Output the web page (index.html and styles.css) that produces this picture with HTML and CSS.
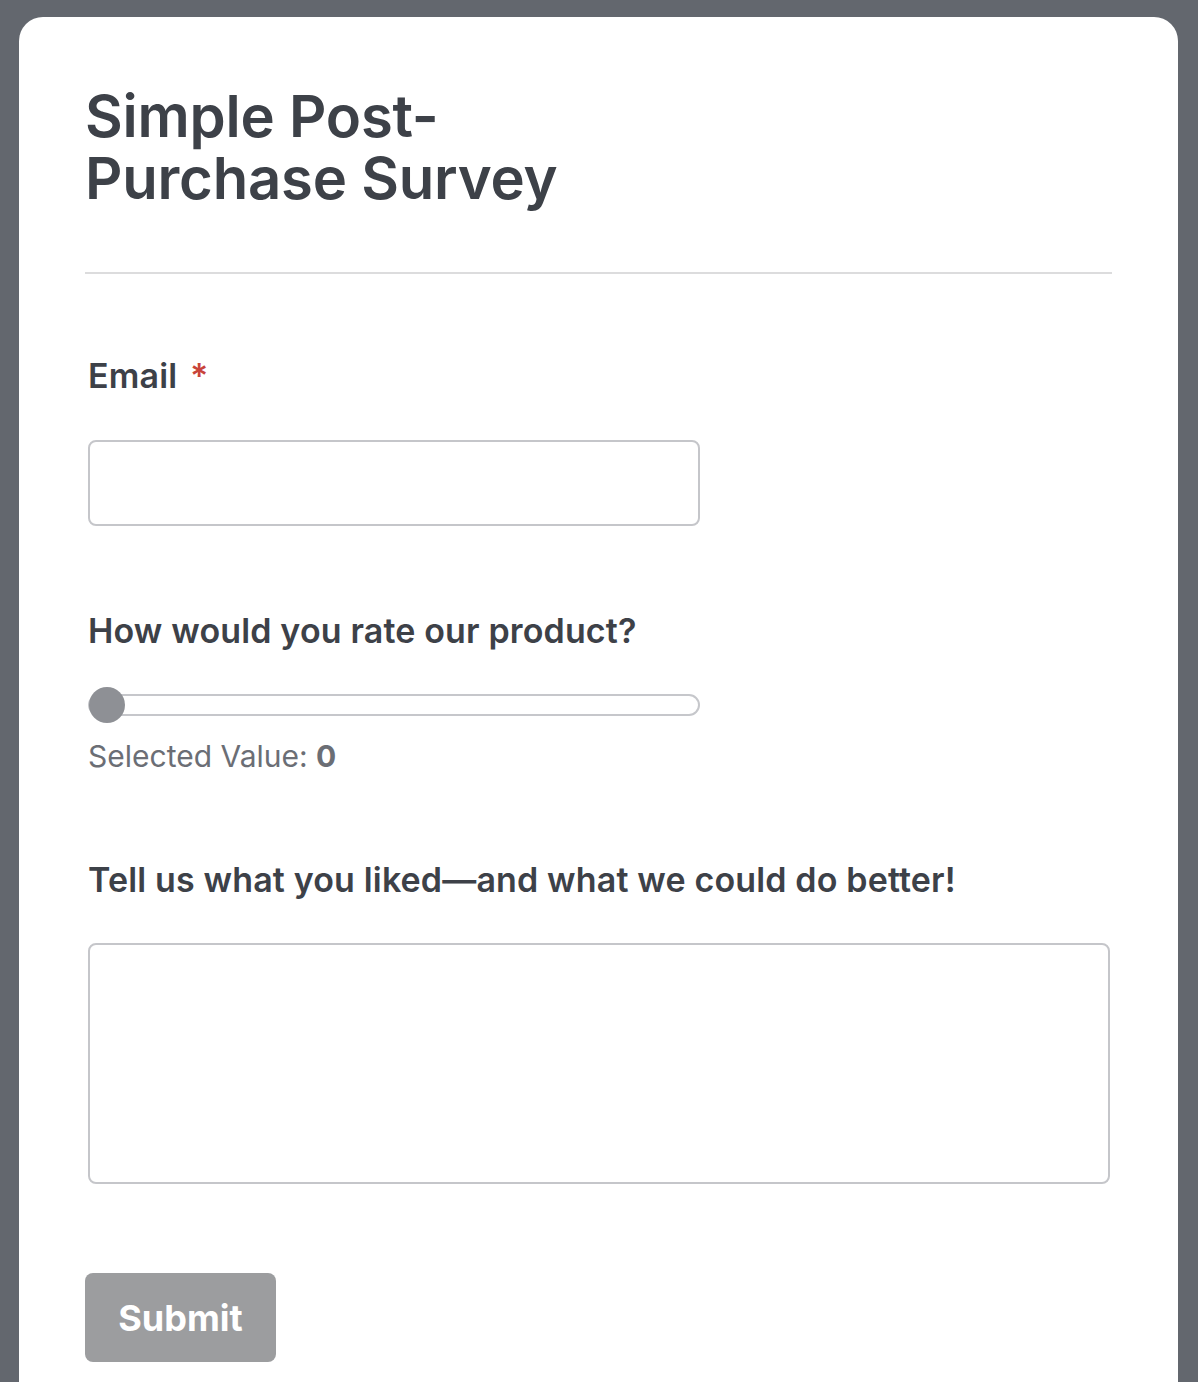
FILE: index.html
```html
<!DOCTYPE html>
<html lang="en">
<head>
    <meta charset="UTF-8">
    <meta name="viewport" content="width=device-width, initial-scale=1.0">
    <title>Simple Post-Purchase Survey</title>
    <link rel="stylesheet" href="styles.css">
</head>
<body>
    <div id="card">
        <h1 class="title">Simple Post-Purchase Survey</h1>
        <hr class="divider">
        <form id="survey">
            <div class="field email">
                <label for="email">Email <span class="required">*</span></label>
                <input type="email" id="email" class="text-input">
            </div>
            <div class="field rating">
                <label for="rating">How would you rate our product?</label>
                <div class="slider">
                    <div class="slider-track"></div>
                    <div class="slider-thumb"></div>
                </div>
                <p class="selected">Selected Value: <strong>0</strong></p>
            </div>
            <div class="field feedback">
                <label for="feedback">Tell us what you liked—and what we could do better!</label>
                <textarea id="feedback" class="text-area"></textarea>
            </div>
            <button type="button" class="submit">Submit</button>
        </form>
    </div>
</body>
</html>
```

FILE: styles.css
```css
body {
    font-family: Inter, "Noto Sans", sans-serif;
    background-color: #63676e;
    margin: 0;
    padding: 17px 20px 0 19px;
    height: 1382px;
    box-sizing: border-box;
    overflow: hidden;
    color: #3d4148;
}

#card {
    background: white;
    border-radius: 24px 24px 0 0;
    padding: 68px 66px 40px 66px;
    min-height: 1400px;
}

.title {
    font-size: 58px;
    font-weight: 600;
    line-height: 62px;
    letter-spacing: -0.2px;
    max-width: 560px;
    margin: 0;
}

.divider {
    border: none;
    border-top: 2px solid #dcdcdd;
    margin: 63px 0 0 0;
}

#survey {
    padding: 0 2px 0 3px;
}

.field {
    display: flex;
    flex-direction: column;
}

.field label {
    font-size: 34px;
    font-weight: 600;
    line-height: 40px;
    letter-spacing: 0.15px;
}

.required {
    color: #c8443a;
    margin-left: 4px;
}

.email {
    margin-top: 82px;
}

.text-input {
    margin-top: 44px;
    width: 612px;
    height: 86px;
    box-sizing: border-box;
    border: 2px solid #c5c6ca;
    border-radius: 8px;
}

.rating {
    margin-top: 85px;
}

.slider {
    position: relative;
    width: 612px;
    height: 36px;
    margin-top: 36px;
}

.slider-track {
    position: absolute;
    left: 0;
    right: 0;
    top: 7px;
    height: 22px;
    box-sizing: border-box;
    border: 2px solid #c6c7cb;
    border-radius: 11px;
}

.slider-thumb {
    position: absolute;
    left: 1px;
    top: 0;
    width: 36px;
    height: 36px;
    border-radius: 50%;
    background: #8e9095;
}

.selected {
    margin: 15px 0 0 0;
    font-size: 30px;
    line-height: 36px;
    color: #6b6e75;
}

.selected strong {
    font-weight: 700;
}

.feedback {
    margin-top: 86px;
}

.text-area {
    margin-top: 43px;
    width: 1022px;
    height: 241px;
    box-sizing: border-box;
    border: 2px solid #c5c6ca;
    border-radius: 8px;
    resize: none;
}

.submit {
    margin: 89px 0 0 -3px;
    width: 191px;
    height: 89px;
    border: none;
    border-radius: 8px;
    background: #9c9d9f;
    color: white;
    font-family: Inter, "Noto Sans", sans-serif;
    font-size: 36px;
    font-weight: 700;
}
```
